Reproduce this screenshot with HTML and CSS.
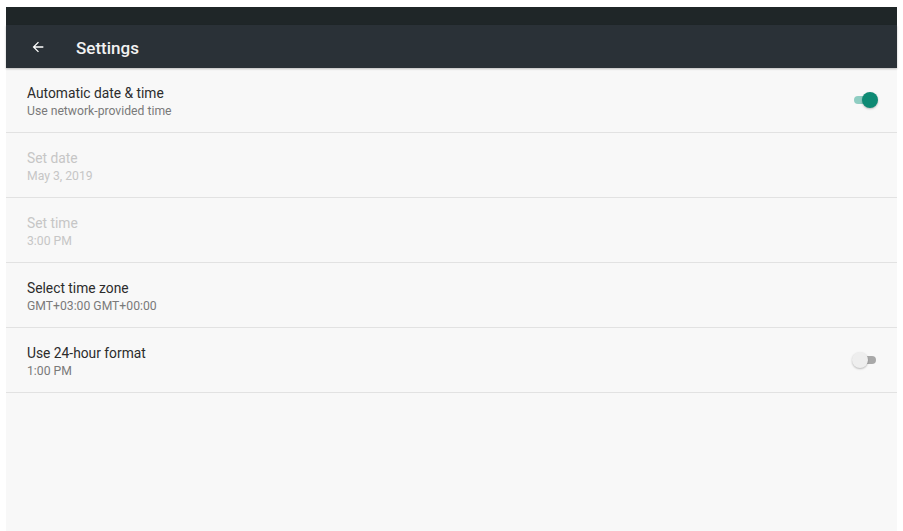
FILE: index.html
```html
<!DOCTYPE html>
<html lang="en">
<head>
    <meta charset="UTF-8">
    <title>Settings</title>
    <link rel="stylesheet" href="styles.css">
</head>
<body>

<div class="screen">
    <!-- status strip + toolbar -->
    <div class="statusBar"></div>
    <div class="toolbar">
        <svg class="backArrow" width="16" height="16" viewBox="0 0 24 24">
            <path d="M20 11H7.830l5.590-5.590L12 4l-8 8 8 8 1.410-1.410L7.830 13H20v-2z" fill="#ffffff"/>
        </svg>
        <span class="toolbarTitle">Settings</span>
    </div>

    <!-- date & time preferences -->
    <ul class="prefList">
        <li class="pref">
            <div class="prefText">
                <div class="prefTitle">Automatic date &amp; time</div>
                <div class="prefSummary">Use network-provided time</div>
            </div>
            <div class="switch on"><span class="track"></span><span class="thumb"></span></div>
        </li>
        <li class="pref disabled">
            <div class="prefText">
                <div class="prefTitle">Set date</div>
                <div class="prefSummary">May 3, 2019</div>
            </div>
        </li>
        <li class="pref disabled">
            <div class="prefText">
                <div class="prefTitle">Set time</div>
                <div class="prefSummary">3:00 PM</div>
            </div>
        </li>
        <li class="pref">
            <div class="prefText">
                <div class="prefTitle">Select time zone</div>
                <div class="prefSummary">GMT+03:00 GMT+00:00</div>
            </div>
        </li>
        <li class="pref">
            <div class="prefText">
                <div class="prefTitle">Use 24-hour format</div>
                <div class="prefSummary">1:00 PM</div>
            </div>
            <div class="switch off"><span class="track"></span><span class="thumb"></span></div>
        </li>
    </ul>
</div>

</body>
</html>
```

FILE: styles.css
```css
html, body {
    margin: 0;
    padding: 0;
    background: #ffffff;
}

body {
    padding: 7px 6px 0 6px;
    height: 531px;
    box-sizing: border-box;
    font-family: Roboto, "Liberation Sans", sans-serif;
}

.screen {
    height: 100%;
    background: #f8f8f8;
    display: flex;
    flex-direction: column;
}

.statusBar {
    height: 18px;
    background: #1f2628;
}

.toolbar {
    height: 43px;
    background: #2a3137;
    display: flex;
    align-items: center;
    padding-left: 24px;
    box-shadow: 0 1px 2px rgba(0, 0, 0, 0.25);
}

.backArrow {
    margin-right: 30px;
    margin-top: 1px;
}

.toolbarTitle {
    color: #f2f2f2;
    font-size: 17px;
    font-weight: 500;
    margin-top: 2px;
}

.prefList {
    list-style: none;
    margin: 0;
    padding: 0;
}

.pref {
    height: 64px;
    border-bottom: 1px solid #e2e2e2;
    display: flex;
    align-items: center;
    justify-content: space-between;
    padding: 0 21px;
}

.prefText {
    display: flex;
    flex-direction: column;
    gap: 3px;
    margin-top: 2px;
}

.prefTitle {
    font-size: 13.8px;
    color: #2c2c2c;
}

.prefSummary {
    font-size: 12.2px;
    color: #7a7a7a;
}

.pref.disabled .prefTitle,
.pref.disabled .prefSummary {
    color: #c6c6c6;
}

.switch {
    position: relative;
    width: 26px;
    height: 16px;
    margin-right: -2px;
}

.switch .track {
    position: absolute;
    left: 2px;
    right: 2px;
    top: 4px;
    height: 8px;
    border-radius: 4px;
}

.switch .thumb {
    position: absolute;
    top: 0;
    width: 16px;
    height: 16px;
    border-radius: 50%;
    box-shadow: 0 1px 2px rgba(0, 0, 0, 0.25);
}

.switch.on .track {
    background: #8fcdc2;
}

.switch.on .thumb {
    right: 0;
    background: #0e8a74;
}

.switch.off .track {
    background: #a9a9a9;
}

.switch.off .thumb {
    left: 0;
    background: #eeeeee;
}
```
